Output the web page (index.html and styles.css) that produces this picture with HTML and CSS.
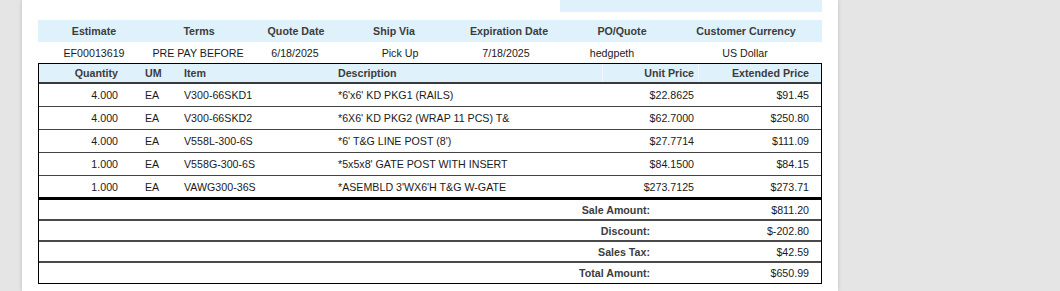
FILE: index.html
```html
<!DOCTYPE html>
<html>
<head>
<meta charset="utf-8">
<link rel="stylesheet" href="styles.css">
</head>
<body>
<div class="viewer">
  <div class="page">
    <div class="top-row"><div class="top-block"></div></div>

    <div class="info-head">
      <div>Estimate</div><div>Terms</div><div>Quote Date</div><div>Ship Via</div><div>Expiration Date</div><div>PO/Quote</div><div>Customer Currency</div>
    </div>
    <div class="info-vals">
      <div>EF00013619</div><div>PRE PAY BEFORE</div><div>6/18/2025</div><div>Pick Up</div><div>7/18/2025</div><div>hedgpeth</div><div>US Dollar</div>
    </div>

    <div class="items">
      <div class="irow ihead">
        <div class="c-qty">Quantity</div><div class="c-um">UM</div><div class="c-item">Item</div><div class="c-desc">Description</div><div class="c-unit">Unit Price</div><div class="c-ext">Extended Price</div>
      </div>
      <div class="irow">
        <div class="c-qty">4.000</div><div class="c-um">EA</div><div class="c-item">V300-66SKD1</div><div class="c-desc">*6'x6' KD PKG1 (RAILS)</div><div class="c-unit">$22.8625</div><div class="c-ext">$91.45</div>
      </div>
      <div class="irow">
        <div class="c-qty">4.000</div><div class="c-um">EA</div><div class="c-item">V300-66SKD2</div><div class="c-desc">*6X6' KD PKG2 (WRAP 11 PCS) T&amp;</div><div class="c-unit">$62.7000</div><div class="c-ext">$250.80</div>
      </div>
      <div class="irow">
        <div class="c-qty">4.000</div><div class="c-um">EA</div><div class="c-item">V558L-300-6S</div><div class="c-desc">*6' T&amp;G LINE POST (8')</div><div class="c-unit">$27.7714</div><div class="c-ext">$111.09</div>
      </div>
      <div class="irow">
        <div class="c-qty">1.000</div><div class="c-um">EA</div><div class="c-item">V558G-300-6S</div><div class="c-desc">*5x5x8' GATE POST WITH INSERT</div><div class="c-unit">$84.1500</div><div class="c-ext">$84.15</div>
      </div>
      <div class="irow last">
        <div class="c-qty">1.000</div><div class="c-um">EA</div><div class="c-item">VAWG300-36S</div><div class="c-desc">*ASEMBLD 3'WX6'H T&amp;G W-GATE</div><div class="c-unit">$273.7125</div><div class="c-ext">$273.71</div>
      </div>
    </div>

    <div class="totals">
      <div class="trow"><div class="t-label">Sale Amount:</div><div class="t-val">$811.20</div></div>
      <div class="trow"><div class="t-label">Discount:</div><div class="t-val">$-202.80</div></div>
      <div class="trow"><div class="t-label">Sales Tax:</div><div class="t-val">$42.59</div></div>
      <div class="trow final"><div class="t-label">Total Amount:</div><div class="t-val">$650.99</div></div>
    </div>
  </div>
</div>
</body>
</html>
```

FILE: styles.css
```css
html, body {
  margin: 0;
  padding: 0;
  background: #e5e5e5;
  height: 291px;
  overflow: hidden;
}

.viewer {
  display: flex;
  padding-left: 22px;
  height: 291px;
}

.page {
  width: 784px;
  padding: 0 16px;
  background: #ffffff;
  height: 291px;
  box-shadow: 0 0 4px rgba(0, 0, 0, 0.18);
  font-family: "Liberation Sans", Arial, sans-serif;
  font-size: 10.67px;
  color: #1a1a1a;
}

.top-row {
  display: flex;
  justify-content: flex-end;
  height: 12px;
  margin-bottom: 8px;
}

.top-block {
  width: 262px;
  height: 12px;
  background: #dff1fb;
}

.info-head,
.info-vals {
  display: grid;
  align-items: center;
  text-align: center;
}

.info-head {
  grid-template-columns: 112px 98px 96px 100px 130px 96px 152px;
  height: 22px;
  background: #dff1fb;
  font-weight: bold;
  color: #3c3c3c;
}

.info-vals {
  grid-template-columns: 112px 96px 98px 112px 100px 112px 154px;
  height: 21px;
}

.items {
  border: 1px solid #000;
  border-bottom: none;
}

.irow {
  display: grid;
  grid-template-columns: 91px 45px 155px 272px 96px 123px;
  height: 22px;
  align-items: center;
  border-bottom: 1px solid #444;
}

.irow.ihead {
  height: 18px;
  background: #dff1fb;
  font-weight: bold;
  color: #3c3c3c;
  border-bottom: 2px solid #3a3a3a;
}

.irow.ihead .c-unit,
.irow.ihead .c-ext {
  border-left: 1px solid #eef8fd;
  height: 18px;
  line-height: 18px;
}

.irow.last {
  height: 21px;
  border-bottom: 2px solid #000;
}

.c-qty { text-align: right; padding-right: 12px; }
.c-um { padding-left: 15px; }
.c-item { padding-left: 9px; }
.c-desc { padding-left: 8px; }
.c-unit { text-align: right; padding-right: 4px; }
.c-ext { text-align: right; padding-right: 12px; }

.totals {
  border: 1px solid #000;
  border-top: 1px solid #000;
}

.trow {
  display: grid;
  grid-template-columns: 622px 160px;
  height: 19px;
  align-items: center;
  border-bottom: 2px solid #4a4a4a;
}

.trow.final {
  height: 20px;
  border-bottom: none;
}

.t-label {
  text-align: right;
  padding-right: 11px;
  font-weight: bold;
  color: #3c3c3c;
}

.t-val {
  text-align: right;
  padding-right: 12px;
}
```
